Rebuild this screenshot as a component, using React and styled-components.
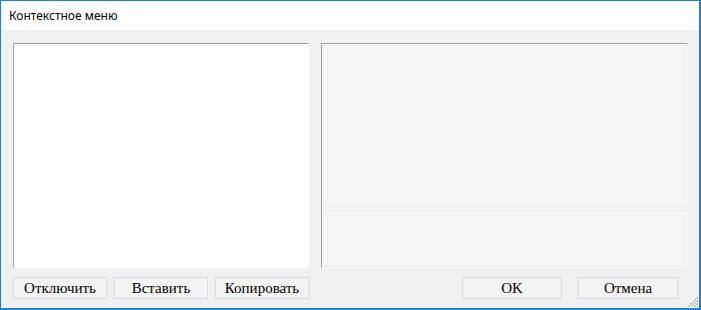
import styled, { createGlobalStyle } from "styled-components";

const GlobalStyle = createGlobalStyle`
  html, body {
    margin: 0;
    padding: 0;
    background: #ffffff;
  }
`;

export default function App() {
  return (
    <>
      <GlobalStyle />
      <Window>
        <TitleBar>Контекстное меню</TitleBar>
        <Body>
          <ListPanel />
          <PreviewPanel>
            <Pane $grow />
            <Pane />
          </PreviewPanel>
          <ButtonRow>
            <Button>Отключить</Button>
            <Button>Вставить</Button>
            <Button>Копировать</Button>
          </ButtonRow>
          <ButtonRow $right>
            <Button $wide>OK</Button>
            <Button $wide>Отмена</Button>
          </ButtonRow>
          <Grip width="12" height="12" viewBox="0 0 12 12">
            <path d="M11 1 L1 11 M11 4 L4 11 M11 7 L7 11 M11 10 L10 11" stroke="#a8a8a8" strokeWidth="1" />
          </Grip>
        </Body>
      </Window>
    </>
  );
}

const Window = styled.div`
  width: 701px;
  height: 310px;
  box-sizing: border-box;
  border: 1px solid #1883d7;
  border-right-width: 2px;
  border-bottom-width: 2px;
  display: flex;
  flex-direction: column;
  background: #f0f0f0;
`;

const TitleBar = styled.div`
  height: 29px;
  flex: none;
  background: #ffffff;
  font-family: "Noto Sans", "Open Sans", sans-serif;
  font-size: 12px;
  color: #000000;
  line-height: 29px;
  padding-left: 8px;
`;

const Body = styled.div`
  position: relative;
  flex: 1;
  display: grid;
  grid-template-columns: 296px 367px;
  grid-template-rows: 225px 22px;
  column-gap: 12px;
  row-gap: 9px;
  padding: 13px 0 0 12px;
`;

const ListPanel = styled.div`
  box-sizing: border-box;
  background: #ffffff;
  border: 1px solid #ffffff;
  border-top-color: #a0a0a0;
  border-left-color: #a0a0a0;
`;

const PreviewPanel = styled.div`
  box-sizing: border-box;
  background: #f5f5f5;
  border: 1px solid #fbfbfb;
  border-top-color: #a0a0a0;
  border-left-color: #a0a0a0;
  display: flex;
  flex-direction: column;
  gap: 3px;
`;

const Pane = styled.div`
  box-sizing: border-box;
  flex: ${(p) => (p.$grow ? "0 0 163px" : "1")};
  border: 1px solid #eaeaea;
  border-top-color: ${(p) => (p.$grow ? "transparent" : "#eaeaea")};
  border-left-color: transparent;
`;

const ButtonRow = styled.div`
  display: flex;
  gap: ${(p) => (p.$right ? "16px" : "7px")};
  justify-content: ${(p) => (p.$right ? "flex-end" : "flex-start")};
  padding-right: ${(p) => (p.$right ? "10px" : "0")};
`;

const Button = styled.button`
  box-sizing: border-box;
  width: ${(p) => (p.$wide ? "100px" : "94px")};
  height: 22px;
  margin: 0;
  padding: 0;
  background: #f4f4f4;
  border: 1px solid #d9dae2;
  font-family: "Liberation Serif", "Times New Roman", serif;
  font-size: 15px;
  color: #000000;
  line-height: 20px;
`;

const Grip = styled.svg`
  position: absolute;
  right: 0;
  bottom: 0;
`;
